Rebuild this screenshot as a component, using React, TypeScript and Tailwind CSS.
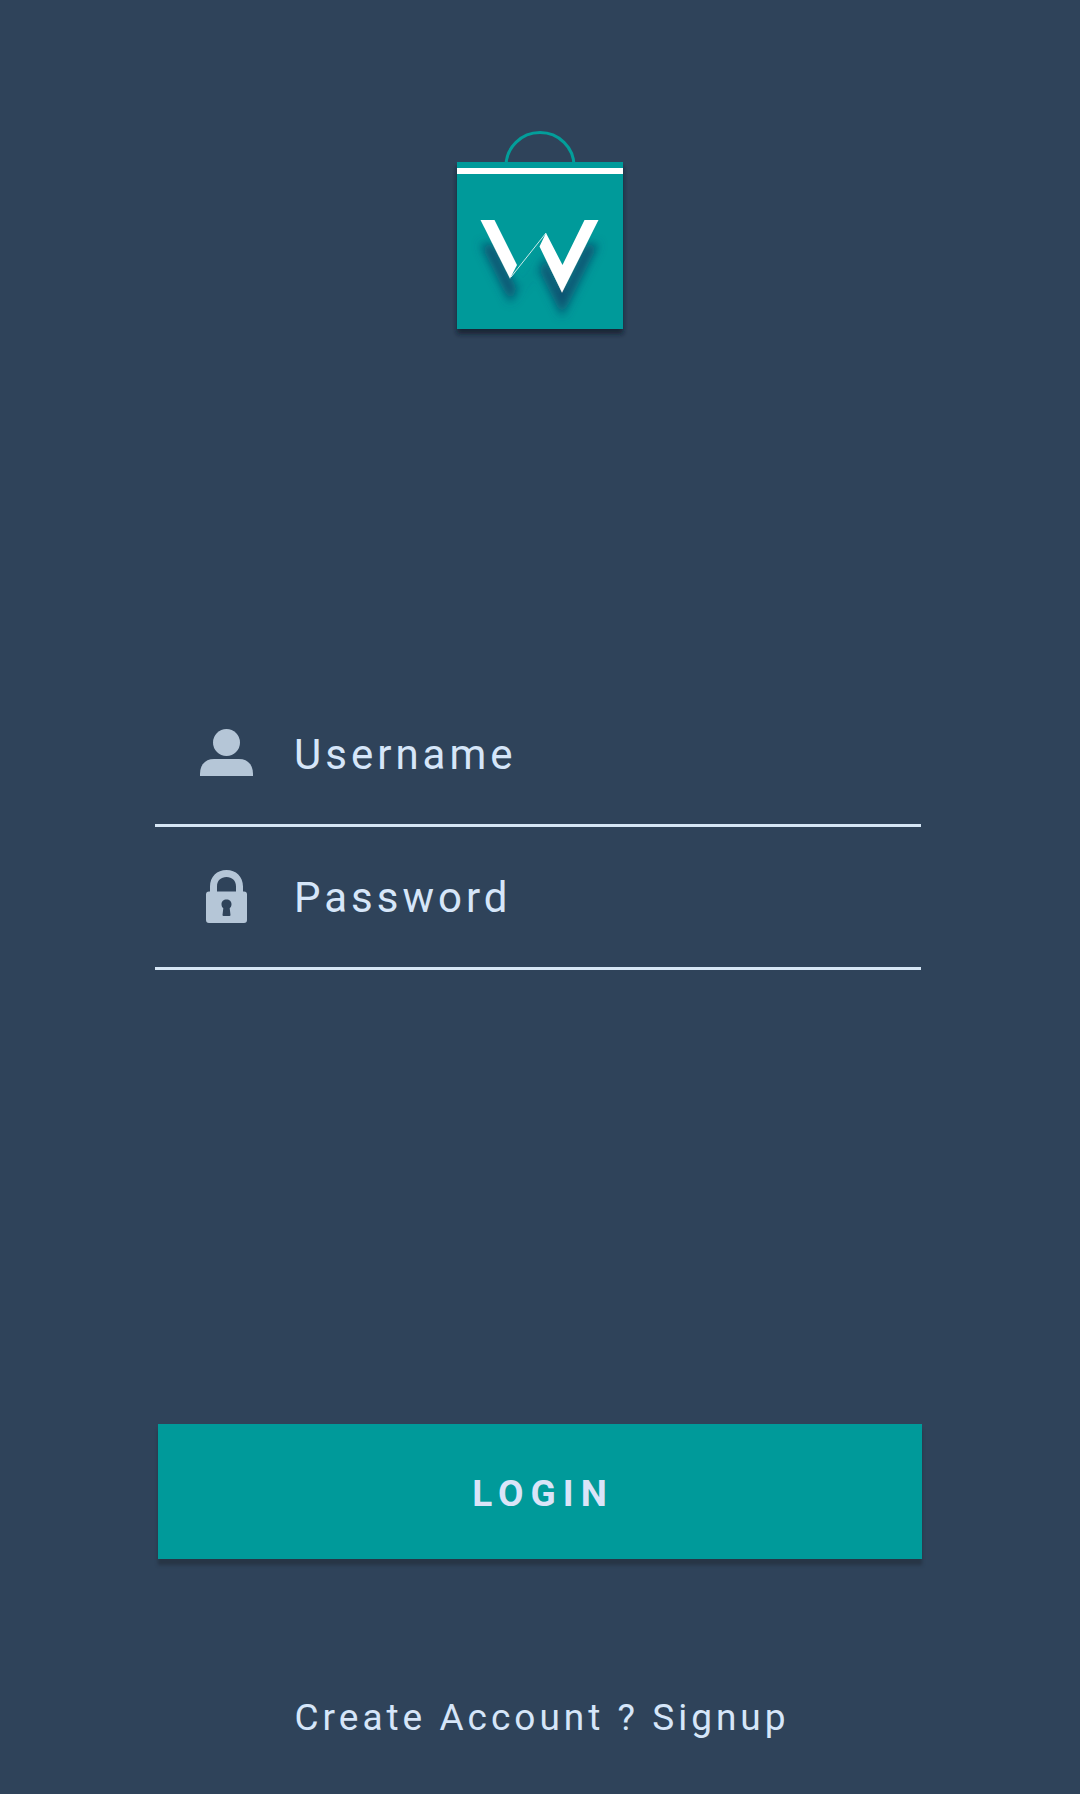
import type { ReactNode } from "react";

function Logo() {
  return (
    <svg className="h-[230px] w-[200px] shrink-0" viewBox="0 0 200 230" role="img" aria-label="W shopping bag">
      <defs>
        <filter id="bagShadow" x="-20%" y="-20%" width="140%" height="140%">
          <feDropShadow dx="0" dy="5" stdDeviation="2.500" floodColor="#141c2c" floodOpacity="0.75" />
        </filter>
        <filter id="markShadow" x="-30%" y="-30%" width="160%" height="200%">
          <feDropShadow dx="0" dy="24" stdDeviation="5" floodColor="#0a4a6c" floodOpacity="0.85" />
        </filter>
      </defs>
      <ellipse cx="100" cy="46" rx="34" ry="33.500" fill="none" stroke="#039e9a" strokeWidth="3" />
      <rect x="17" y="42" width="166" height="167" fill="#009a9a" filter="url(#bagShadow)" />
      <rect x="17" y="48" width="166" height="6" fill="#fff" />
      <g fill="#fff" filter="url(#markShadow)">
        <path d="M40.500 100H54.500L77 145L70 158.500Z" />
        <path d="M106 113L122.500 145L144.500 100H158.500L122 172.500L99.500 126.500Z" />
        <path d="M71 157L106 113" stroke="#fff" strokeWidth="0.800" />
      </g>
    </svg>
  );
}

function UserIcon() {
  return (
    <svg className="h-[56px] w-[54px] shrink-0" viewBox="0 0 54 56" fill="#b5c6d7" aria-hidden="true">
      <circle cx="26.500" cy="16.500" r="13.500" />
      <path d="M0 50V48C0 39 5 33 14 33H39C48 33 53 39 53 48V50Z" />
    </svg>
  );
}

function LockIcon() {
  return (
    <svg className="h-[56px] w-[54px] shrink-0" viewBox="0 0 54 56" fill="#b5c6d7" aria-hidden="true">
      <path d="M10 23V17.500C10 7.500 17 1 26.500 1S43 7.500 43 17.500V23H36V17.500C36 11.500 32 8 26.500 8S17 11.500 17 17.500V23Z" />
      <path
        fillRule="evenodd"
        d="M9 22.500H44Q47 22.500 47 25.500V51Q47 54 44 54H9Q6 54 6 51V25.500Q6 22.500 9 22.500ZM26.500 30.500C23.500 30.500 21.500 32.500 21.500 35.200C21.500 37 22.300 38.500 23.300 39.300L22.500 46Q22.500 47 23.500 47H29.500Q30.500 47 30.500 46L29.700 39.300C30.700 38.500 31.500 37 31.500 35.200C31.500 32.500 29.500 30.500 26.500 30.500Z"
      />
    </svg>
  );
}

type FieldProps = { id: string; label: string; type: string; icon: ReactNode };

function Field({ id, label, type, icon }: FieldProps) {
  return (
    <div className="flex items-center border-b-3 border-[#d6e6f5] pl-[45px]">
      <label htmlFor={id} aria-label={label}>
        {icon}
      </label>
      <input
        id={id}
        name={id}
        type={type}
        placeholder={label}
        className="h-[140px] min-w-0 flex-1 bg-transparent pl-10 text-[42px] tracking-[4px] text-[#d6e6f9] outline-none placeholder:text-[#d6e6f9]"
      />
    </div>
  );
}

export default function App() {
  return (
    <main className="flex min-h-screen flex-col items-center bg-[#2f435a] px-6 pt-[120px] pb-10 font-['Roboto',sans-serif] text-[#d6e6f9]">
      <Logo />
      <form className="mt-[334px] flex w-full flex-col items-center" onSubmit={(e) => e.preventDefault()}>
        <div className="mr-1 w-full max-w-[766px]">
          <Field id="username" label="Username" type="text" icon={<UserIcon />} />
          <Field id="password" label="Password" type="password" icon={<LockIcon />} />
        </div>
        <button
          type="submit"
          className="mt-[454px] h-[135px] w-full max-w-[764px] bg-[#009a9a] pt-1 pl-[6px] text-[37px] font-bold tracking-[7px] text-[#dae4f8] shadow-[0_6px_3px_rgba(38,50,65,0.8)]"
        >
          LOGIN
        </button>
      </form>
      <a href="#signup" className="mt-[135px] pl-1 text-[37px] leading-[48px] tracking-[4px]">
        Create Account ? Signup
      </a>
    </main>
  );
}
